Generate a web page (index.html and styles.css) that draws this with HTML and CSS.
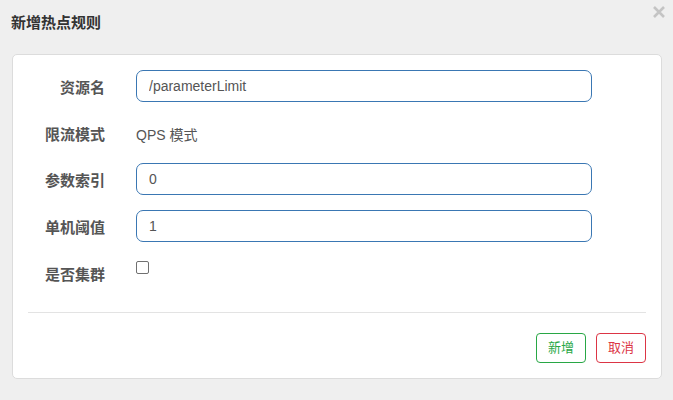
FILE: index.html
```html
<!DOCTYPE html>
<html lang="zh">
<head>
<meta charset="utf-8">
<title>新增热点规则</title>
<link rel="stylesheet" href="styles.css">
</head>
<body>
<div class="modal">
  <div class="modal-header">
    <h4 class="modal-title">新增热点规则</h4>
    <button class="close" type="button" aria-label="关闭">
      <svg width="12" height="12" viewBox="0 0 12 12"><path d="M1 1L11 11M11 1L1 11" stroke="#c4c4c4" stroke-width="2.6" stroke-linecap="butt"/></svg>
    </button>
  </div>
  <div class="card">
    <form class="form">
      <div class="row">
        <label class="label">资源名</label>
        <div class="control"><input class="input" type="text" value="/parameterLimit"></div>
      </div>
      <div class="row row-static">
        <label class="label">限流模式</label>
        <div class="control"><p class="static">QPS 模式</p></div>
      </div>
      <div class="row">
        <label class="label">参数索引</label>
        <div class="control"><input class="input" type="text" value="0"></div>
      </div>
      <div class="row">
        <label class="label">单机阈值</label>
        <div class="control"><input class="input" type="text" value="1"></div>
      </div>
      <div class="row row-last">
        <label class="label">是否集群</label>
        <div class="control"><input class="checkbox" type="checkbox"></div>
      </div>
    </form>
    <hr class="divider">
    <div class="footer">
      <button class="btn btn-green" type="button">新增</button>
      <button class="btn btn-red" type="button">取消</button>
    </div>
  </div>
</div>
</body>
</html>
```

FILE: styles.css
```css
* { box-sizing: border-box; }
html, body {
  margin: 0;
  padding: 0;
  background: #efefef;
  font-family: "Liberation Sans", Arial, "Noto Sans CJK SC", sans-serif;
  color: #555;
}
.modal {
  padding: 0 11px 0 12px;
  position: relative;
}
.modal-header {
  padding: 13px 0 21px;
}
.modal-title {
  margin: 0;
  font-size: 15px;
  line-height: 20px;
  font-weight: bold;
  color: #333;
  padding-left: 0;
  margin-left: -1px;
}
.close {
  position: absolute;
  top: 6px;
  right: 8px;
  width: 12px;
  height: 12px;
  padding: 0;
  border: 0;
  background: none;
  line-height: 0;
}
.card {
  width: 650px;
  background: #fff;
  border: 1px solid #dcdcdc;
  border-radius: 5px;
  padding: 15px;
}
.form { margin: 0; }
.row {
  display: flex;
  align-items: flex-start;
  height: 32px;
  margin-bottom: 15px;
}
.row-static { height: 31px; }
.row-last { margin-bottom: 0; }
.label {
  width: 92px;
  padding: 8px 15px 0 0;
  text-align: right;
  font-size: 15px;
  line-height: 20px;
  font-weight: bold;
  color: #555;
}
.control {
  margin-left: 16px;
}
.input {
  width: 456px;
  height: 32px;
  border: 1px solid #3a77b3;
  border-radius: 7px;
  padding: 0 12px;
  font-family: "Liberation Sans", Arial, sans-serif;
  font-size: 14px;
  color: #555;
  background: #fff;
  outline: none;
}
.static {
  margin: 0;
  padding-top: 8px;
  font-size: 14px;
  line-height: 20px;
  color: #555;
}
.checkbox {
  -webkit-appearance: none;
  appearance: none;
  display: block;
  width: 13px;
  height: 13px;
  margin: 4px 0 0;
  border: 1px solid #707070;
  border-radius: 2px;
  background: #fff;
}
.divider {
  border: 0;
  border-top: 1px solid #e3e3e3;
  margin: 23px 0 0;
}
.footer {
  display: flex;
  justify-content: flex-end;
  gap: 10px;
  margin-top: 20px;
}
.btn {
  width: 50px;
  height: 30px;
  padding: 0;
  background: #fff;
  border-radius: 4px;
  font-family: "Liberation Sans", "Noto Sans CJK SC", sans-serif;
  font-size: 13px;
  line-height: 28px;
}
.btn-green {
  border: 1px solid #28a745;
  color: #28a745;
}
.btn-red {
  border: 1px solid #dc3545;
  color: #dc3545;
}
```
